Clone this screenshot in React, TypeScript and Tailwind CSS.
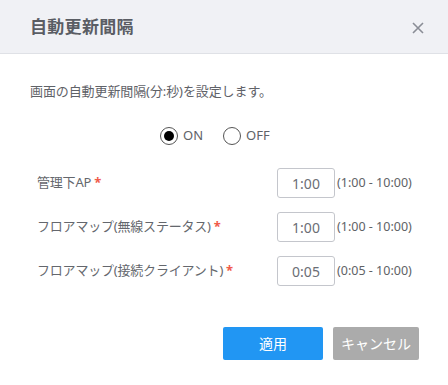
import React from "react";

const font = { fontFamily: '"Noto Sans", "Noto Sans CJK JP", sans-serif' };

function Row({ label, value, range }: { label: string; value: string; range: string }) {
  return (
    <div className="flex items-center h-[30px] pl-[37px]">
      <div className="w-[240px] text-[13px] text-[#64676d] flex items-center">
        <span className="tracking-[-0.2px]">{label}</span>
        <span className="text-[#f05a4a] ml-[3px] font-bold">*</span>
      </div>
      <div className="w-[58px] h-[30px] border border-[#c4c6cc] rounded-[3px] flex items-center justify-center text-[14px] text-[#6b6e75]">
        {value}
      </div>
      <div className="ml-[2px] text-[12.5px] text-[#606266]">{range}</div>
    </div>
  );
}

export default function App() {
  return (
    <div className="w-[448px] h-[385px] bg-white" style={font}>
      <div className="h-[54px] bg-[#f0f1f5] border-b border-[#dfe1e6] flex items-center justify-between pl-[30px] pr-[24px]">
        <div className="text-[17px] font-bold text-[#5a5d64] tracking-[0.3px]">自動更新間隔</div>
        <svg width="12" height="12" viewBox="0 0 12 12" className="mt-[2px]">
          <path d="M1 1L11 11M11 1L1 11" stroke="#8a8d96" strokeWidth="1.6" />
        </svg>
      </div>
      <div className="pt-[27px] pl-[30px] text-[13px] text-[#5f6268] leading-[20px] tracking-[-0.1px]">
        画面の自動更新間隔(分:秒)を設定します。
      </div>
      <div className="flex items-center mt-[26px] pl-[160px] h-[18px] text-[13px] text-[#5f6268]">
        <div className="w-[18px] h-[18px] rounded-full border border-[#555] flex items-center justify-center">
          <div className="w-[10px] h-[10px] rounded-full bg-black" />
        </div>
        <span className="ml-[5px]">ON</span>
        <div className="ml-[20px] w-[18px] h-[18px] rounded-full border border-[#555]" />
        <span className="ml-[5px]">OFF</span>
      </div>
      <div className="mt-[23px] flex flex-col gap-[14px]">
        <Row label="管理下AP" value="1:00" range="(1:00 - 10:00)" />
        <Row label="フロアマップ(無線ステータス)" value="1:00" range="(1:00 - 10:00)" />
        <Row label="フロアマップ(接続クライアント)" value="0:05" range="(0:05 - 10:00)" />
      </div>
      <div className="flex justify-end gap-[10px] pr-[29px] mt-[41px]">
        <div className="w-[100px] h-[33px] bg-[#2196f3] rounded-[2px] flex items-center justify-center text-white text-[14px]">
          適用
        </div>
        <div className="w-[86px] h-[33px] bg-[#ababab] rounded-[2px] flex items-center justify-center text-white text-[14px]">
          キャンセル
        </div>
      </div>
    </div>
  );
}
